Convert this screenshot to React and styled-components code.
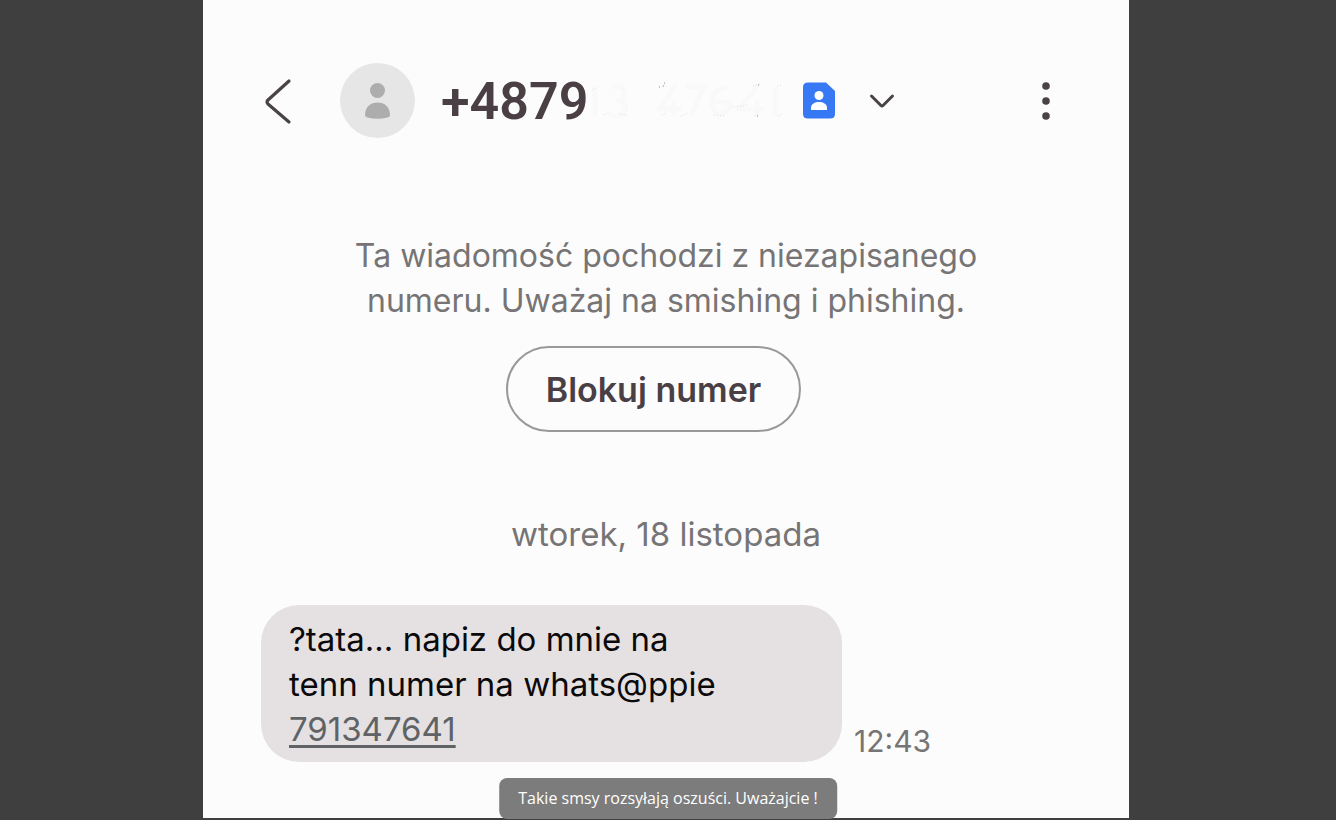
import React from 'react';
import styled, { createGlobalStyle } from 'styled-components';

const GlobalStyle = createGlobalStyle`
  * {
    box-sizing: border-box;
  }
  body {
    margin: 0;
    background: #3f3f3f;
    color: #767474;
    font-family: Inter, Roboto, sans-serif;
  }
  button {
    padding: 0;
    border: 0;
    background: none;
    font: inherit;
    cursor: pointer;
  }
  svg {
    display: block;
  }
`;

const Viewer = styled.figure`
  position: relative;
  display: flex;
  justify-content: center;
  min-height: 100vh;
  margin: 0;
  padding: 0 4px 2px 0;
`;

const Screen = styled.main`
  flex: 1;
  max-width: 926px;
  padding: 62px 58px 48px;
  background: #fcfcfc;
`;

const Header = styled.header`
  display: flex;
  align-items: center;
  height: 77px;
`;

const BackButton = styled.button`
  margin-right: 46px;
`;

const Avatar = styled.div`
  display: grid;
  place-items: center;
  width: 75px;
  height: 75px;
  margin-right: 26px;
  border-radius: 50%;
  background: #e6e6e6;
`;

const Contact = styled.button`
  display: flex;
  align-items: center;
  color: #4a3f44;
`;

const Phone = styled.span`
  padding-top: 2px;
  font-family: Roboto, sans-serif;
  font-size: 52px;
  font-weight: 600;
  line-height: 60px;
`;

const Smudge = styled.svg`
  margin: 0 19px 0 2px;
`;

const Badge = styled.svg`
  margin-right: 34px;
`;

const MenuButton = styled.button`
  margin-left: auto;
  margin-right: 20px;
`;

const Notice = styled.section`
  display: flex;
  flex-direction: column;
  align-items: center;
  margin-top: 94px;

  p {
    margin: 0 0 23px;
    font-size: 32px;
    line-height: 45px;
    text-align: center;
  }
`;

const BlockButton = styled.button`
  && {
    width: 295px;
    height: 86px;
    margin-right: 25px;
    border: 2px solid #9b9899;
    border-radius: 43px;
    color: #4a3f44;
    font-size: 34px;
    font-weight: 600;
  }
`;

const Day = styled.h2`
  margin: 80px 0 48px;
  font-size: 33px;
  font-weight: 400;
  line-height: 45px;
  text-align: center;
`;

const Message = styled.article`
  display: flex;
  align-items: flex-end;
  gap: 12px;
`;

const Bubble = styled.p`
  flex: 0 1 581px;
  margin: 0;
  padding: 12px 28px 10px;
  border-radius: 38px;
  background: #e5e1e2;
  color: #0b090a;
  font-size: 33px;
  line-height: 45px;

  a {
    color: #5f6365;
    text-decoration-thickness: 3px;
    text-underline-offset: 4px;
  }
`;

const Time = styled.time`
  font-size: 30px;
  line-height: 42px;
`;

const Caption = styled.figcaption`
  position: absolute;
  bottom: 1px;
  left: 50%;
  padding: 8px 19px 9px;
  border-radius: 8px;
  background: #7c7c7c;
  color: #fff;
  font-family: 'Open Sans', sans-serif;
  font-size: 16px;
  line-height: 24px;
  white-space: nowrap;
  transform: translateX(-50%);
`;

const App = () => (
  <>
    <GlobalStyle />
    <Viewer>
      <Screen>
        <Header>
          <BackButton aria-label="Wstecz">
            <svg width="33" height="50" viewBox="0 0 33 50" fill="none">
              <path
                d="M28 5 7 24Q5 26 7 28L28 46"
                stroke="#4a4346"
                strokeWidth="3.2"
                strokeLinecap="round"
                strokeLinejoin="round"
              />
            </svg>
          </BackButton>
          <Avatar>
            <svg width="26" height="38" viewBox="0 0 26 38" fill="#adadad">
              <circle cx="12.500" cy="8.5" r="7.5" />
              <path d="M0 33C0 25 5.500 20.500 12.500 20.500S25 25 25 33Q25 35 22.500 35.600Q12.500 38 2.500 35.600Q0 35 0 33Z" />
            </svg>
          </Avatar>
          <Contact aria-label="+4879">
            <Phone>+4879</Phone>
            {/* what is left of the erased digits */}
            <Smudge width="194" height="42" viewBox="0 0 194 42" fill="none">
              <path
                d="M5 7V36M22 7Q36 4 34 14T26 20Q38 22 35 31T18 33M86 5 70 29H91M84 20V36M96 7H114L101 36M137 7Q119 10 122 27Q128 39 138 30T125 22M168 5 149 29H174M167 20V36M185 7V36"
                stroke="#f9f9f9"
                strokeWidth="5"
              />
              <path
                d="M2 10l4-2M13 35l5-2M29 33l8 3M72 7l5-3M72 35l5-2M91 36l6-3M124 35l10 1M144 27l15-2M163 6l7-2M164 36l5-2M187 6l5-1M188 36l4-2"
                stroke="#dedede"
                strokeWidth="1"
                strokeDasharray="1 2"
              />
              <path d="M69 7h1M73 6h1M74 3h1M168 5h1M167 36h1" stroke="#8f8f8f" />
            </Smudge>
            <Badge width="32" height="37" viewBox="0 0 32 37">
              <path d="M5 .5H23L32 9V32Q32 36.500 27 36.500H5Q0 36.500 0 32V5Q0 .5 5 .5Z" fill="#3778f4" />
              <circle cx="16" cy="13.500" r="4.500" fill="#fff" />
              <path d="M8 28V25.500C8 22 12 20 16 20S24 22 24 25.500V28Z" fill="#fff" />
            </Badge>
            <svg width="26" height="16" viewBox="0 0 26 16" fill="none">
              <path
                d="M2.500 3 12 12.500Q13 13.500 14 12.500L23.500 3"
                stroke="#4a4346"
                strokeWidth="3"
                strokeLinecap="round"
              />
            </svg>
          </Contact>
          <MenuButton aria-label="Więcej opcji">
            <svg width="10" height="40" viewBox="0 0 10 40" fill="#4a4346">
              <circle cx="5" cy="5" r="3.800" />
              <circle cx="5" cy="20" r="3.800" />
              <circle cx="5" cy="35" r="3.800" />
            </svg>
          </MenuButton>
        </Header>

        <Notice>
          <p>
            Ta wiadomość pochodzi z niezapisanego
            <br />
            numeru. Uważaj na smishing i phishing.
          </p>
          <BlockButton>Blokuj numer</BlockButton>
        </Notice>

        <Day>wtorek, 18 listopada</Day>

        <Message>
          <Bubble>
            ?tata... napiz do mnie na
            <br />
            tenn numer na whats@ppie
            <br />
            <a href="tel:791347641">791347641</a>
          </Bubble>
          <Time dateTime="12:43">12:43</Time>
        </Message>
      </Screen>
      <Caption>Takie smsy rozsyłają oszuści. Uważajcie !</Caption>
    </Viewer>
  </>
);

export default App;
